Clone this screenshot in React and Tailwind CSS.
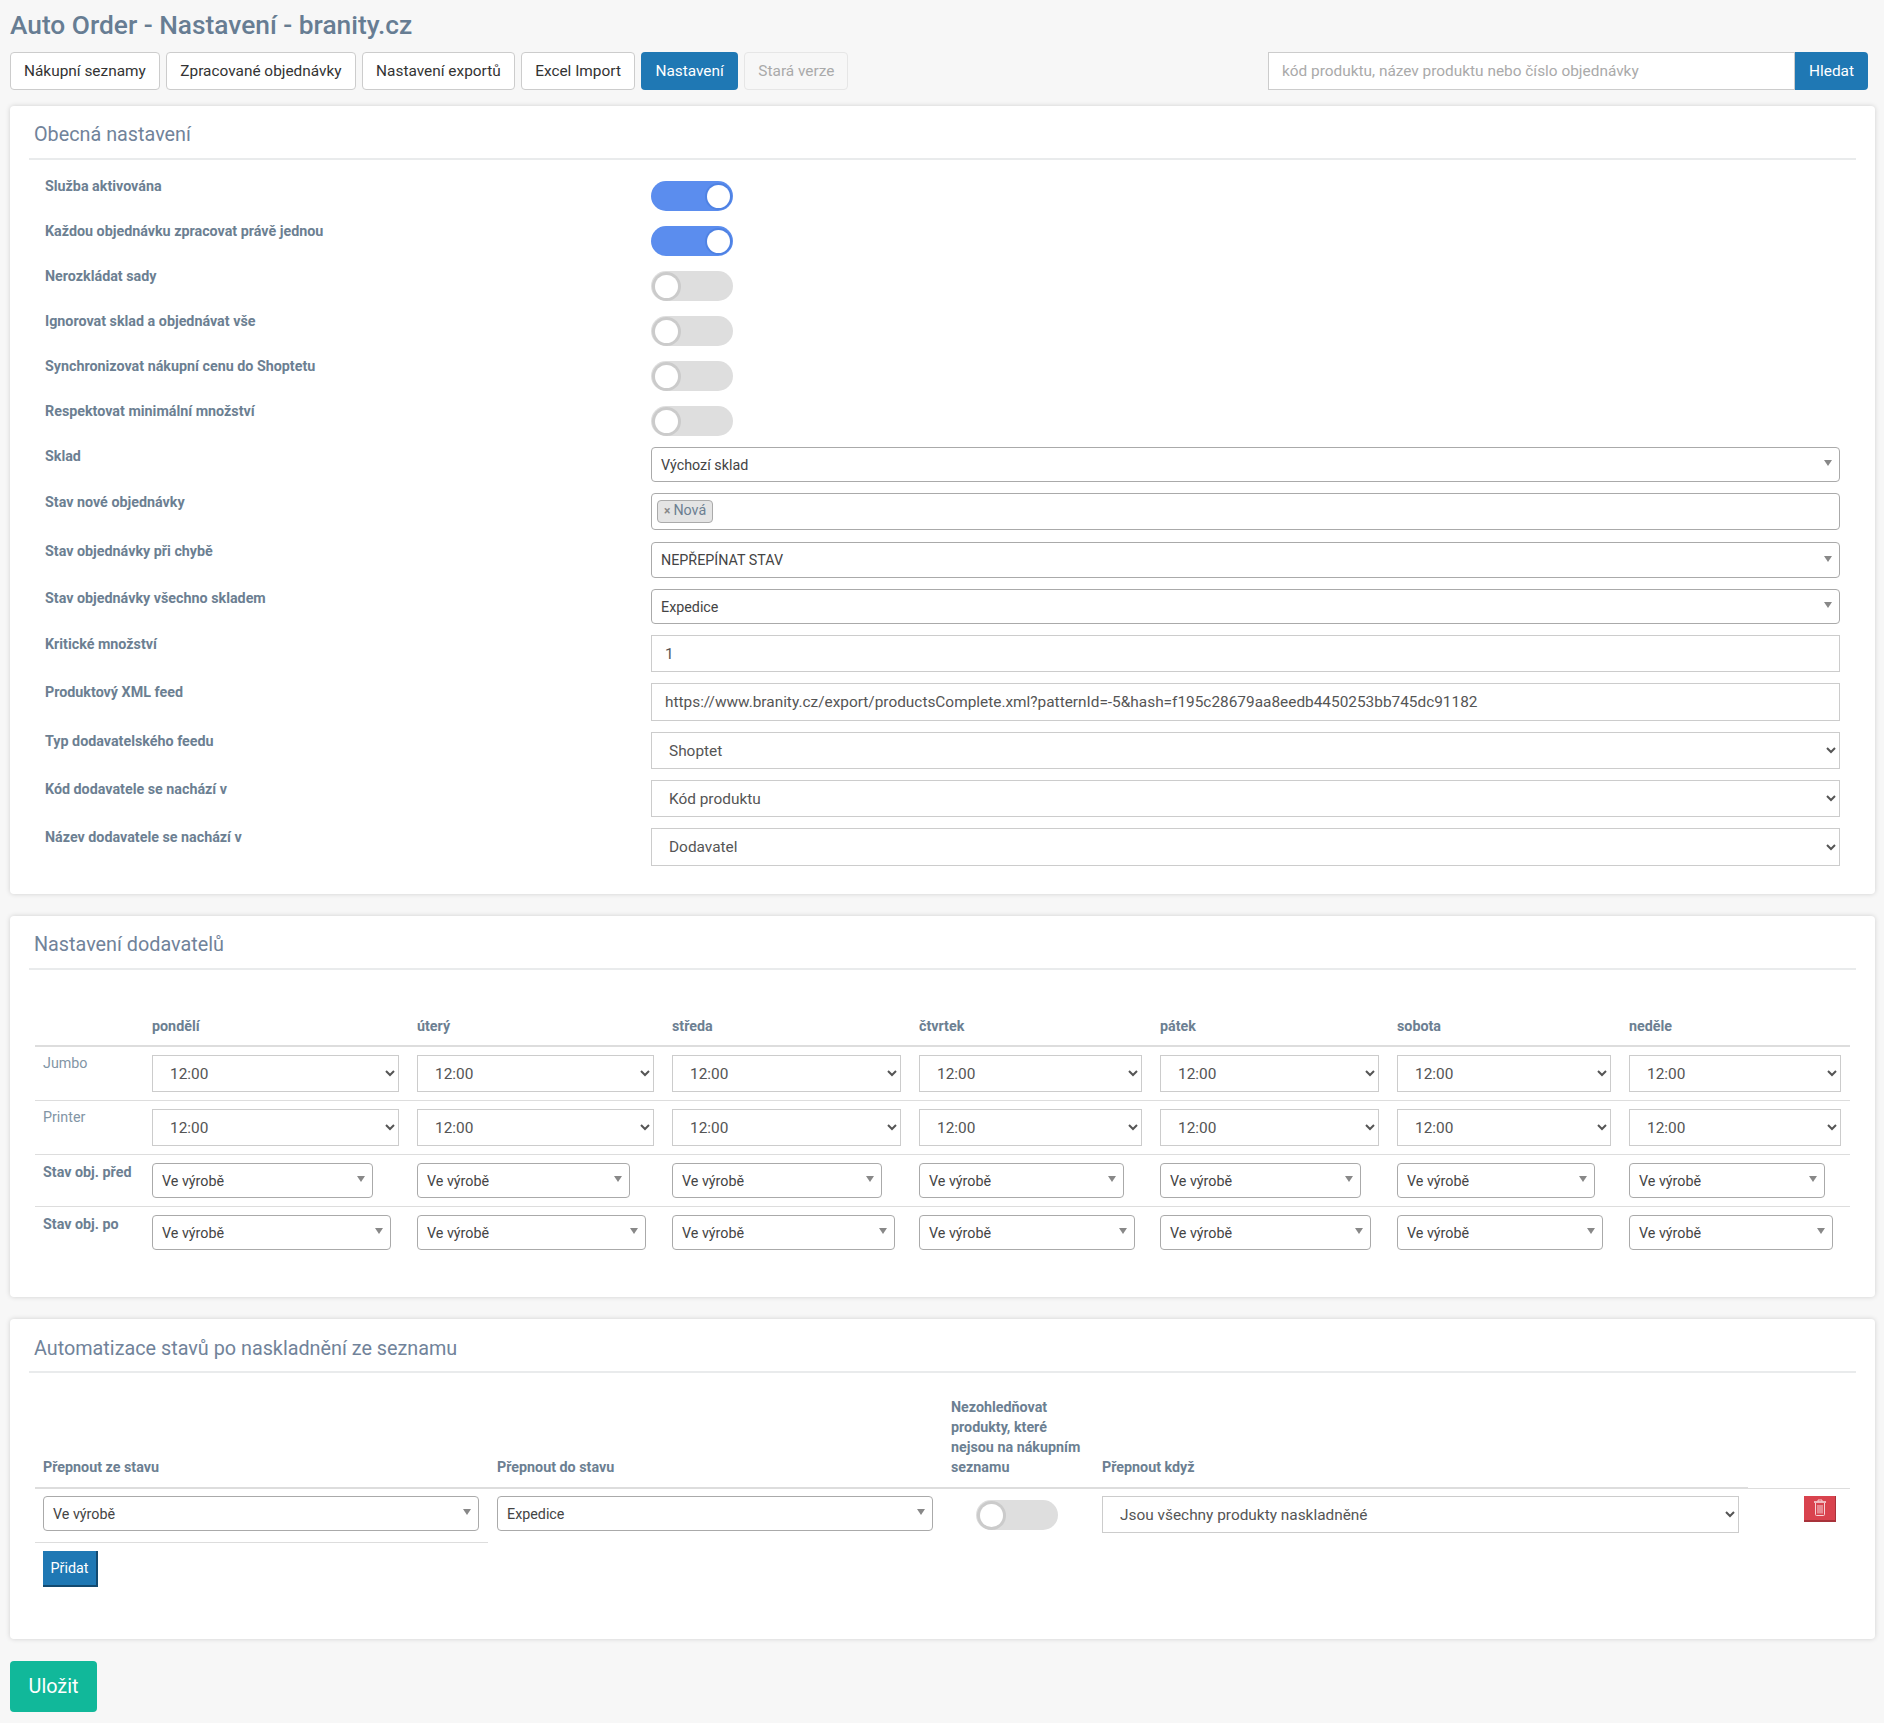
import React from 'react';

const TIMES = ['w-[247px]', 'w-[237px]', 'w-[229px]', 'w-[223px]', 'w-[219px]', 'w-[214px]', 'w-[212px]'];
const BEFORE = ['w-[221px]', 'w-[213px]', 'w-[210px]', 'w-[205px]', 'w-[201px]', 'w-[198px]', 'w-[196px]'];
const AFTER = ['w-[239px]', 'w-[229px]', 'w-[223px]', 'w-[216px]', 'w-[211px]', 'w-[206px]', 'w-[204px]'];
const DAYS = ['pondělí', 'úterý', 'středa', 'čtvrtek', 'pátek', 'sobota', 'neděle'];

function Toggle({ on }) {
  return (
    <div className={`flex h-[30px] w-[82px] shrink-0 items-center rounded-full ${on ? 'justify-end bg-[#5b8dee] pr-[3px]' : 'justify-start bg-[#dedede] pl-[4px]'}`}>
      <div className={`h-[23px] w-[23px] rounded-full bg-white ${on ? 'shadow-[0_0_0_2px_#4f82e3]' : 'shadow-[0_0_0_3px_#cbcbcb]'}`} />
    </div>
  );
}

// select2 style box
function Select2({ value, className }) {
  return (
    <div className={`flex items-center justify-between rounded-[4px] border border-[#aaa] bg-white pl-[9px] pr-[7px] text-[14.3px] text-[#444] ${className}`}>
      <span className="mt-[2px]">{value}</span>
      <span className="mb-[3px] h-0 w-0 border-x-[4px] border-t-[6px] border-x-transparent border-t-[#888]" />
    </div>
  );
}

function NativeSelect({ value, className }) {
  return (
    <select defaultValue={value} className={`border border-[#ccc] bg-white pl-[13px] pr-3 text-[15.4px] text-[#555] ${className}`}>
      <option>{value}</option>
    </select>
  );
}

function Row({ label, toggle, className, children }) {
  return (
    <div className={`flex ${className}`}>
      <div className={`w-[606px] shrink-0 text-[14.3px] font-bold text-[#6c7f92] ${toggle ? 'leading-[10px]' : 'leading-[18px]'}`}>{label}</div>
      <div className="flex-1">{children}</div>
    </div>
  );
}

function Card({ title, className, children }) {
  return (
    <section className={`mb-[22px] rounded-[4px] bg-white shadow-[0_0_5px_rgba(0,0,0,0.16)] ${className}`}>
      <h2 className="mx-[19px] flex h-[54px] items-center border-b-2 border-[#e9ebec] pl-[5px] pt-[6px] text-[19.8px] font-normal text-[#71839a]">{title}</h2>
      {children}
    </section>
  );
}

function TrashIcon() {
  return (
    <svg width="12" height="17" viewBox="0 0 12 17" fill="none" stroke="#f6d5d7" strokeWidth="1">
      <path d="M4 2.5V1h4v1.5" />
      <path d="M0 3h12" strokeWidth="1.6" />
      <path d="M1.5 4v11.5a1 1 0 0 0 1 1h7a1 1 0 0 0 1-1V4" />
      <path d="M4 6v8.5M6 6v8.5M8 6v8.5" />
    </svg>
  );
}

function General() {
  const toggles = [
    ['Služba aktivována', true],
    ['Každou objednávku zpracovat právě jednou', true],
    ['Nerozkládat sady', false],
    ['Ignorovat sklad a objednávat vše', false],
    ['Synchronizovat nákupní cenu do Shoptetu', false],
    ['Respektovat minimální množství', false],
  ];
  return (
    <Card title="Obecná nastavení" className="px-0 pb-[28px]">
      <div className="px-[35px] pt-[21px]">
        {toggles.map(([label, on], i) => (
          <Row key={label} label={label} toggle className={i === 5 ? 'mb-[11px]' : 'mb-[15px]'}>
            <Toggle on={on} />
          </Row>
        ))}
        <Row label="Sklad" className="mb-[11px]">
          <Select2 value="Výchozí sklad" className="h-[35px]" />
        </Row>
        <Row label="Stav nové objednávky" className="mb-[12px]">
          <div className="flex h-[37px] items-start rounded-[4px] border border-[#aaa] bg-white pl-[5px] pt-[6px]">
            <span className="flex h-[23px] items-center gap-[3px] rounded-[4px] border border-[#aaa] bg-[#e4e4e4] px-[6px] pb-[2px] text-[14.3px] leading-none text-[#6c7f92]">
              <span className="text-[12px] font-bold text-[#888]">×</span>Nová
            </span>
          </div>
        </Row>
        <Row label="Stav objednávky při chybě" className="mb-[11px]">
          <Select2 value="NEPŘEPÍNAT STAV" className="h-[36px]" />
        </Row>
        <Row label="Stav objednávky všechno skladem" className="mb-[11px]">
          <Select2 value="Expedice" className="h-[35px]" />
        </Row>
        <Row label="Kritické množství" className="mb-[11px]">
          <input defaultValue="1" className="h-[37px] w-full border border-[#ccc] bg-white pl-[13px] pr-3 text-[15.4px] text-[#555]" />
        </Row>
        <Row label="Produktový XML feed" className="mb-[11px]">
          <input
            defaultValue="https://www.branity.cz/export/productsComplete.xml?patternId=-5&hash=f195c28679aa8eedb4450253bb745dc91182"
            className="h-[38px] w-full border border-[#ccc] bg-white pl-[13px] pr-3 text-[15.4px] text-[#555]"
          />
        </Row>
        <Row label="Typ dodavatelského feedu" className="mb-[11px]">
          <NativeSelect value="Shoptet" className="h-[37px] w-full" />
        </Row>
        <Row label="Kód dodavatele se nachází v" className="mb-[11px]">
          <NativeSelect value="Kód produktu" className="h-[37px] w-full" />
        </Row>
        <Row label="Název dodavatele se nachází v">
          <NativeSelect value="Dodavatel" className="h-[38px] w-full" />
        </Row>
      </div>
    </Card>
  );
}

function Suppliers() {
  return (
    <Card title="Nastavení dodavatelů" className="pb-[39px]">
      <div className="mt-[36px] px-[25px]">
        <table className="w-full table-fixed border-collapse text-[14.3px]">
          <colgroup>
            <col className="w-[108px]" />
            <col className="w-[265px]" />
            <col className="w-[255px]" />
            <col className="w-[247px]" />
            <col className="w-[241px]" />
            <col className="w-[237px]" />
            <col className="w-[232px]" />
            <col className="w-[230px]" />
          </colgroup>
          <thead>
            <tr className="border-b-2 border-[#dddddd]">
              <th />
              {DAYS.map((d) => (
                <th key={d} className="h-[39px] px-[9px] pb-[8px] pt-[10px] text-left align-top font-bold text-[#6c7f92]">{d}</th>
              ))}
            </tr>
          </thead>
          <tbody>
            {['Jumbo', 'Printer'].map((name) => (
              <tr key={name} className="border-b border-[#dddddd]">
                <td className="pl-[8px] pt-[6px] align-top font-normal text-[#8295a5]">{name}</td>
                {TIMES.map((w, i) => (
                  <td key={i} className="px-[9px] py-[8px] align-top">
                    <NativeSelect value="12:00" className={`block h-[37px] ${w}`} />
                  </td>
                ))}
              </tr>
            ))}
            <tr className="border-b border-[#dddddd]">
              <td className="whitespace-nowrap pl-[8px] pt-[7px] align-top font-bold text-[#6c7f92]">Stav obj. před</td>
              {BEFORE.map((w, i) => (
                <td key={i} className="px-[9px] pb-[8px] pt-[8px] align-top">
                  <Select2 value="Ve výrobě" className={`h-[35px] ${w}`} />
                </td>
              ))}
            </tr>
            <tr>
              <td className="pl-[8px] pt-[7px] align-top font-bold text-[#6c7f92]">Stav obj. po</td>
              {AFTER.map((w, i) => (
                <td key={i} className="px-[9px] pb-[8px] pt-[8px] align-top">
                  <Select2 value="Ve výrobě" className={`h-[35px] ${w}`} />
                </td>
              ))}
            </tr>
          </tbody>
        </table>
      </div>
    </Card>
  );
}

function Automation() {
  const th = 'px-[9px] pb-[10px] pt-[9px] text-left align-bottom font-bold leading-[20px] text-[#6c7f92] border-b-2 border-[#dddddd]';
  return (
    <Card title="Automatizace stavů po naskladnění ze seznamu" className="pb-[52px]">
      <div className="mt-[15px] px-[25px]">
        <table className="w-full table-fixed border-collapse text-[14.3px]">
          <colgroup>
            <col className="w-[453px]" />
            <col className="w-[454px]" />
            <col className="w-[151px]" />
            <col className="w-[655px]" />
            <col className="w-[102px]" />
          </colgroup>
          <thead>
            <tr>
              <th className={`${th} pl-[8px]`}>Přepnout ze stavu</th>
              <th className={th}>Přepnout do stavu</th>
              <th className={th}>Nezohledňovat produkty, které nejsou na nákupním seznamu</th>
              <th className={th}>Přepnout když</th>
              <th className="border-b border-[#dddddd]" />
            </tr>
          </thead>
          <tbody>
            <tr>
              <td className="border-b border-[#dddddd] pb-[11px] pl-[8px] pr-[9px] pt-[7px] align-top">
                <Select2 value="Ve výrobě" className="h-[35px]" />
              </td>
              <td className="px-[9px] pt-[7px] align-top">
                <Select2 value="Expedice" className="h-[35px]" />
              </td>
              <td className="pl-[34px] pt-[11px] align-top">
                <Toggle on={false} />
              </td>
              <td className="px-[9px] pt-[7px] align-top">
                <NativeSelect value="Jsou všechny produkty naskladněné" className="block h-[37px] w-full" />
              </td>
              <td className="pl-[56px] pt-[7px] align-top">
                <button type="button" className="flex h-[26px] w-[32px] items-center justify-center border-b-2 border-r border-[#a8323a] bg-[#d9434e]">
                  <TrashIcon />
                </button>
              </td>
            </tr>
            <tr>
              <td className="pl-[8px] pt-[8px]" colSpan={5}>
                <button type="button" className="block h-[36px] w-[55px] border-b-2 border-r-2 border-[#134a70] bg-[#1f78b4] text-white">Přidat</button>
              </td>
            </tr>
          </tbody>
        </table>
      </div>
    </Card>
  );
}

export default function App() {
  const navs = ['Nákupní seznamy', 'Zpracované objednávky', 'Nastavení exportů', 'Excel Import'];
  return (
    <div className="min-h-screen bg-[#f7f7f7] pb-[11px] pl-[10px] pr-[9px] font-[family-name:Roboto,sans-serif]">
      <h1 className="flex h-[52px] items-center text-[26.3px] font-medium text-[#677d93]">Auto Order - Nastavení - branity.cz</h1>

      <div className="mb-[16px] flex h-[38px] items-stretch justify-between pr-[7px] text-[15.4px]">
        <div className="flex gap-[6.5px]">
          {navs.map((n) => (
            <button key={n} type="button" className="rounded-[4px] border border-[#ccc] bg-white px-[13px] pt-px text-[#333]">{n}</button>
          ))}
          <button type="button" className="rounded-[4px] bg-[#1f78b4] px-[14px] pt-px text-white">Nastavení</button>
          <button type="button" className="rounded-[4px] border border-[#e6e6e6] bg-[#f7f7f7] px-[13px] pt-px text-[#aaa]">Stará verze</button>
        </div>
        <div className="flex">
          <input
            placeholder="kód produktu, název produktu nebo číslo objednávky"
            className="w-[527px] border border-[#ccc] bg-white px-[13px] pt-px placeholder:text-[#aaa]"
          />
          <button type="button" className="w-[73px] rounded-r-[4px] bg-[#1f78b4] pt-px text-white">Hledat</button>
        </div>
      </div>

      <General />
      <Suppliers />
      <Automation />

      <button type="button" className="block h-[51px] w-[87px] rounded-[4px] bg-[#11b89a] text-[19.8px] text-white">Uložit</button>
    </div>
  );
}
